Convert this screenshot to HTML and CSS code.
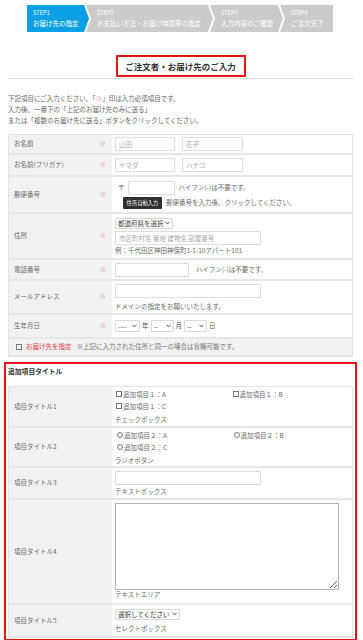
FILE: index.html
```html
<!DOCTYPE html>
<html lang="ja">
<head>
<meta charset="utf-8">
<title>ご注文者・お届け先のご入力</title>
<link rel="stylesheet" href="styles.css">
</head>
<body>
<div class="page">
  <ol class="steps">
    <li class="step first current"><span class="num">STEP1</span><span class="name">お届け先の指定</span></li>
    <li class="step s2"><span class="num">STEP2</span><span class="name">お支払い方法・お届け時間帯の指定</span></li>
    <li class="step s3"><span class="num">STEP3</span><span class="name">入力内容のご確認</span></li>
    <li class="step last"><span class="num">STEP4</span><span class="name">ご注文完了</span></li>
  </ol>

  <div class="heading"><h1>ご注文者・お届け先のご入力</h1></div>

  <p class="intro">下記項目にご入力ください。「<span class="req">※</span>」印は入力必須項目です。<br>入力後、一番下の「上記のお届け先のみに送る」<br>または「複数のお届け先に送る」ボタンをクリックしてください。</p>

  <div class="form">
    <div class="row r1">
      <div class="th"><span>お名前</span><span class="req">※</span></div>
      <div class="td"><div class="line"><input class="in w60" placeholder="山田"><input class="in w61" placeholder="花子"></div></div>
    </div>
    <div class="row r2">
      <div class="th"><span>お名前(フリガナ)</span><span class="req">※</span></div>
      <div class="td"><div class="line"><input class="in w60" placeholder="ヤマダ"><input class="in w61" placeholder="ハナコ"></div></div>
    </div>
    <div class="row r3">
      <div class="th"><span>郵便番号</span><span class="req">※</span></div>
      <div class="td">
        <div class="line"><span class="zipmark">〒</span><input class="in w47"><span class="note">ハイフン(-)は不要です。</span></div>
        <div class="line l2"><button class="zipbtn" type="button">住所自動入力</button><span class="note">郵便番号を入力後、クリックしてください。</span></div>
      </div>
    </div>
    <div class="row r4">
      <div class="th"><span>住所</span><span class="req">※</span></div>
      <div class="td">
        <div class="line"><select class="sel w58"><option>都道府県を選択</option></select></div>
        <div class="line l2"><input class="in w146" placeholder="市区町村名 番地 建物名 部屋番号"></div>
        <div class="hint">例：千代田区神田神保町1-1-10アパート101</div>
      </div>
    </div>
    <div class="row r5">
      <div class="th"><span>電話番号</span><span class="req">※</span></div>
      <div class="td"><div class="line"><input class="in w74"><span class="note gap">ハイフン(-)は不要です。</span></div></div>
    </div>
    <div class="row r6">
      <div class="th"><span>メールアドレス</span><span class="req">※</span></div>
      <div class="td">
        <div class="line"><input class="in w146"></div>
        <div class="hint h2">ドメインの指定をお願いいたします。</div>
      </div>
    </div>
    <div class="row r7">
      <div class="th"><span>生年月日</span><span class="req">※</span></div>
      <div class="td"><div class="line">
        <select class="sel w25"><option>----</option></select><span class="unit">年</span>
        <select class="sel w23"><option>--</option></select><span class="unit">月</span>
        <select class="sel w23"><option>--</option></select><span class="unit">日</span>
      </div></div>
    </div>
    <div class="row r8">
      <label class="ship"><input type="checkbox" class="cb"><span class="red">お届け先を指定</span><span class="omit">※上記に入力された住所と同一の場合は省略可能です。</span></label>
    </div>
  </div>

  <section class="extra">
    <h2>追加項目タイトル</h2>
    <div class="form">
      <div class="row x1">
        <div class="th"><span>項目タイトル1</span></div>
        <div class="td">
          <div class="opts">
            <label class="opt"><input type="checkbox" class="cb">追加項目１：A</label>
            <label class="opt"><input type="checkbox" class="cb">追加項目１：B</label>
            <label class="opt"><input type="checkbox" class="cb">追加項目１：C</label>
          </div>
          <div class="hint">チェックボックス</div>
        </div>
      </div>
      <div class="row x2">
        <div class="th"><span>項目タイトル2</span></div>
        <div class="td">
          <div class="opts">
            <label class="opt"><input type="radio" name="r2" class="rb">追加項目２：A</label>
            <label class="opt"><input type="radio" name="r2" class="rb">追加項目２：B</label>
            <label class="opt"><input type="radio" name="r2" class="rb">追加項目２：C</label>
          </div>
          <div class="hint">ラジオボタン</div>
        </div>
      </div>
      <div class="row x3">
        <div class="th"><span>項目タイトル3</span></div>
        <div class="td">
          <div class="line"><input class="in w146"></div>
          <div class="hint">テキストボックス</div>
        </div>
      </div>
      <div class="row x4">
        <div class="th"><span>項目タイトル4</span></div>
        <div class="td">
          <textarea class="ta"></textarea>
          <div class="hint">テキストエリア</div>
        </div>
      </div>
      <div class="row x5">
        <div class="th"><span>項目タイトル5</span></div>
        <div class="td">
          <div class="line"><select class="sel w65 dark"><option>選択してください</option></select></div>
          <div class="hint h2">セレクトボックス</div>
        </div>
      </div>
    </div>
  </section>
</div>
</body>
</html>
```

FILE: styles.css
```css
* { box-sizing: border-box; margin: 0; padding: 0; }
html, body { background: #fff; }
body {
  margin: 0;
  font-family: "Noto Sans CJK JP", "Noto Sans", sans-serif;
  font-size: 6.5px;
  line-height: 1.4;
  color: #666;
  overflow: hidden;
}
.page { padding: 5px 10px 0 8px; }

/* steps */
.steps { list-style: none; display: flex; margin-left: 19px; width: 306px; height: 27px; }
.step {
  background: #cbcbcb;
  color: #fff;
  display: flex;
  flex-direction: column;
  justify-content: center;
  padding-left: 11px;
  margin-left: -3px;
  clip-path: polygon(0 0, calc(100% - 5px) 0, 100% 50%, calc(100% - 5px) 100%, 0 100%, 5px 50%);
}
.step.first { margin-left: 0; padding-left: 6px; width: 62px; clip-path: polygon(0 0, calc(100% - 5px) 0, 100% 50%, calc(100% - 5px) 100%, 0 100%); }
.step.current { background: #0aa0e6; }
.step.s2 { width: 127px; }
.step.s3 { width: 73px; }
.step.last { width: 53px; clip-path: polygon(0 0, 100% 0, 100% 100%, 0 100%, 5px 50%); }
.step .num { font-size: 5.5px; line-height: 9px; letter-spacing: 0.1px; }
.step .name { font-size: 6.5px; line-height: 10px; white-space: nowrap; }

/* heading */
.heading { margin-top: 23px; text-align: center; border-bottom: 1px solid #dcdcdc; padding-bottom: 1px; }
.heading h1 {
  display: inline-block;
  width: 130px;
  height: 22px;
  border: 2px solid #e5141e;
  font-size: 8.5px;
  line-height: 18px;
  font-weight: bold;
  color: #333;
}

.intro { margin-top: 14px; line-height: 11px; color: #666; }
.req { color: #f29a9f; }

/* form table */
.form { margin-top: 8px; border: 1px solid #e3e3e3; border-bottom: none; }
.row { display: flex; border-bottom: 2px solid #e6e6e6; }
.row .th {
  width: 103px;
  flex: none;
  background: #f1f1f1;
  display: flex;
  align-items: center;
  justify-content: space-between;
  padding: 0 6px 0 5px;
  color: #6a6a6a;
}
.row .td {
  flex: 1;
  display: flex;
  flex-direction: column;
  justify-content: center;
  padding: 0 3px;
  color: #6a6a6a;
}
.line { display: flex; align-items: center; }
.l2 { margin-top: 2px; }

.r1 { height: 20px; }
.r2 { height: 22px; }
.r3 { height: 37px; }
.r4 { height: 46px; }
.r5 { height: 21px; }
.r6 { height: 34px; }
.r7 { height: 24px; }
.r8 { height: 18px; background: #f1f1f1; align-items: center; }

.in {
  height: 14px;
  border: 1px solid #dedede;
  background: #fff;
  font: inherit;
  font-size: 6.5px;
  color: #666;
  padding: 0 3px;
  outline: none;
}
.in::placeholder { color: #aaa; }
.in + .in { margin-left: 7px; }
.w60 { width: 60px; }
.w61 { width: 61px; }
.w47 { width: 47px; }
.w74 { width: 74px; }
.w146 { width: 146px; }

.zipmark { margin: 0 3px 0 3px; color: #555; }
.note { margin-left: 4px; white-space: nowrap; }
.note.gap { margin-left: 7px; }
.zipbtn {
  margin-left: 8px;
  width: 39px;
  height: 12px;
  border: none;
  border-radius: 1px;
  background: #2f2f2f;
  color: #fff;
  font: inherit;
  font-size: 5.3px;
  line-height: 12px;
}

.sel {
  appearance: none;
  -webkit-appearance: none;
  height: 11px;
  border: 1px solid #d8d8d8;
  border-radius: 1px;
  background: #fff url("data:image/svg+xml,%3Csvg xmlns='http://www.w3.org/2000/svg' width='6' height='4' viewBox='0 0 6 4'%3E%3Cpath d='M0.6 0.6 L3 3 L5.4 0.6' fill='none' stroke='%23333' stroke-width='1.1'/%3E%3C/svg%3E") no-repeat right 2px center / 5px 4px;
  font: inherit;
  font-size: 6.5px;
  line-height: 9px;
  color: #444;
  padding: 0 8px 0 2px;
}
.sel.dark { color: #333; }
.w58 { width: 58px; }
.w25 { width: 25px; }
.w23 { width: 23px; }
.w65 { width: 65px; }
.r7 .sel { height: 12px; }
.unit { margin: 0 2px 0 2px; color: #555; }

.hint { margin-top: 1px; line-height: 9px; color: #6a6a6a; white-space: nowrap; }
.hint.h2 { margin-top: 4px; }

.ship { display: flex; align-items: center; padding-left: 7px; white-space: nowrap; }
.cb, .rb {
  appearance: none;
  -webkit-appearance: none;
  width: 6px;
  height: 6px;
  border: 0.6px solid #777;
  background: #fff;
  margin-right: 1px;
  flex: none;
}
.rb { border-radius: 50%; margin-left: 1px; }
.ship .cb { margin-right: 4px; }
.red { color: #e8383d; }
.omit { margin-left: 5px; color: #777; }

/* extra section */
.extra {
  margin: 5px -4px 0 -4px;
  border: 2px solid #e5141e;
  padding: 2px 2px 1px 2px;
}
.extra h2 { font-size: 6.8px; font-weight: bold; color: #333; line-height: 10px; margin-bottom: 10px; }
.extra .form { margin-top: 0; }
.x1 { height: 41px; }
.x2 { height: 40px; }
.x3 { height: 32px; }
.x4 { height: 105px; }
.x5 { height: 33px; }
.opts { display: flex; flex-wrap: wrap; padding-left: 1px; }
.opt { width: 50%; display: flex; align-items: center; line-height: 12px; color: #6a6a6a; white-space: nowrap; }
.x1 .hint, .x2 .hint { margin-top: 1px; line-height: 12px; }
.x3 .hint { margin-top: 2px; }
.ta {
  width: 224px;
  height: 87px;
  border: 1px solid #b5b5b5;
  resize: both;
  background: #fff;
}
.x4 .td { justify-content: flex-start; padding-top: 3px; }
.x4 .hint { margin-top: 0; }
```
